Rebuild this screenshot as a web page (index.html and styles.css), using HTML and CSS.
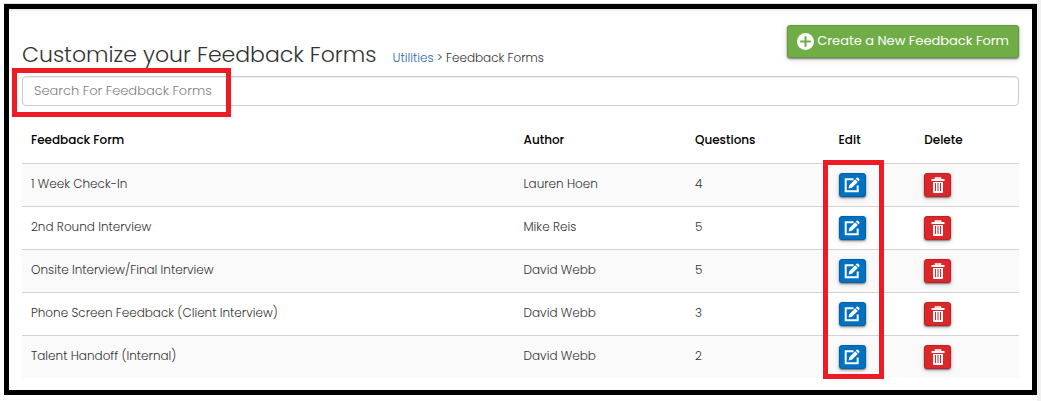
FILE: index.html
```html
<!DOCTYPE html>
<html lang="en">
<head>
<meta charset="utf-8">
<title>Customize your Feedback Forms</title>
<link rel="stylesheet" href="styles.css">
</head>
<body>
<svg class="sprite" aria-hidden="true">
  <symbol id="icon-edit" viewBox="0 0 16 16">
    <path d="M9.5 2.2H1.7v12.1h12V8.6" fill="none" stroke="currentColor" stroke-width="2"/>
    <path d="M4.6 11.6l.7-3.4 5.9-5.9 2.6 2.6-5.9 5.9zM11.8 1.7l.9-.9q.7-.7 1.4 0l1.2 1.2q.7.7 0 1.4l-.9.9z" fill="currentColor"/>
  </symbol>
  <symbol id="icon-trash" viewBox="0 0 16 16">
    <path d="M5.5 3V1h5v2" fill="none" stroke="currentColor" stroke-width="1.6"/>
    <path d="M2 2h12q.5 0 .5.5V4h-13V2.500q0-.5.5-.5z" fill="currentColor"/>
    <path fill-rule="evenodd" d="M3 5h10v10q0 1-1 1H4q-1 0-1-1zM5 6v8h1V6zm2.500 0v8h1V6zM10 6v8h1V6z" fill="currentColor"/>
  </symbol>
</svg>
<main class="page">
  <header class="header">
    <div class="heading">
      <h1 class="title">Customize your Feedback Forms</h1>
      <nav class="crumbs"><a class="link" href="#">Utilities</a> &gt; Feedback Forms</nav>
    </div>
    <button class="btn btn-create" type="button">
      <svg class="icon-plus" viewBox="0 0 16 16" aria-hidden="true"><circle cx="8" cy="8" r="8" fill="currentColor"/><path d="M8 3v10M3 8h10" stroke="#70ad47" stroke-width="2"/></svg>
      <span>Create a New Feedback Form</span>
    </button>
  </header>
  <div class="search">
    <input class="search-input" type="search" placeholder="Search For Feedback Forms" aria-label="Search For Feedback Forms">
    <span class="mark mark-search"></span>
  </div>
  <table class="forms">
    <thead>
      <tr><th class="col-form">Feedback Form</th><th class="col-author">Author</th><th class="col-questions">Questions</th><th class="col-edit">Edit</th><th class="col-delete">Delete</th></tr>
    </thead>
    <tbody>
      <tr><td>1 Week Check-In</td><td>Lauren Hoen</td><td>4</td>
        <td class="marked"><button class="btn btn-icon btn-edit" type="button" aria-label="Edit"><svg class="icon"><use href="#icon-edit"/></svg></button><span class="mark mark-edit"></span></td>
        <td><button class="btn btn-icon btn-delete" type="button" aria-label="Delete"><svg class="icon"><use href="#icon-trash"/></svg></button></td></tr>
      <tr><td>2nd Round Interview</td><td>Mike Reis</td><td>5</td>
        <td><button class="btn btn-icon btn-edit" type="button" aria-label="Edit"><svg class="icon"><use href="#icon-edit"/></svg></button></td>
        <td><button class="btn btn-icon btn-delete" type="button" aria-label="Delete"><svg class="icon"><use href="#icon-trash"/></svg></button></td></tr>
      <tr><td>Onsite Interview/Final Interview</td><td>David Webb</td><td>5</td>
        <td><button class="btn btn-icon btn-edit" type="button" aria-label="Edit"><svg class="icon"><use href="#icon-edit"/></svg></button></td>
        <td><button class="btn btn-icon btn-delete" type="button" aria-label="Delete"><svg class="icon"><use href="#icon-trash"/></svg></button></td></tr>
      <tr><td>Phone Screen Feedback (Client Interview)</td><td>David Webb</td><td>3</td>
        <td><button class="btn btn-icon btn-edit" type="button" aria-label="Edit"><svg class="icon"><use href="#icon-edit"/></svg></button></td>
        <td><button class="btn btn-icon btn-delete" type="button" aria-label="Delete"><svg class="icon"><use href="#icon-trash"/></svg></button></td></tr>
      <tr><td>Talent Handoff (Internal)</td><td>David Webb</td><td>2</td>
        <td><button class="btn btn-icon btn-edit" type="button" aria-label="Edit"><svg class="icon"><use href="#icon-edit"/></svg></button></td>
        <td><button class="btn btn-icon btn-delete" type="button" aria-label="Delete"><svg class="icon"><use href="#icon-trash"/></svg></button></td></tr>
    </tbody>
  </table>
</main>
</body>
</html>
```
FILE: styles.css
```css
* { box-sizing: border-box; }
body {
  margin: 0;
  padding: 4px 4px 5px;
  background: linear-gradient(to left, #f0f0f0 4px, #fff 4px);
  color: #333;
  font-family: Poppins, Inter, "Open Sans", sans-serif;
  font-size: 12px;
  font-weight: 300;
  line-height: 18px;
}
.sprite { position: absolute; width: 0; height: 0; }
.page {
  border: 5px solid #000;
  background: #fff;
  padding: 0 13px 12px;
  box-shadow: inset 0 2px #eee, 0 -1px #ddd;
}
.header {
  display: flex;
  justify-content: space-between;
  align-items: flex-start;
  padding-top: 16px;
  height: 67px;
}
.heading {
  display: flex;
  align-items: baseline;
  gap: 16px;
  padding-top: 16px;
}
.title {
  margin: 0;
  font-size: 22px;
  line-height: 28px;
  font-weight: 300;
}
.link { color: #1f6bb0; text-decoration: none; }
.btn {
  display: flex;
  align-items: center;
  justify-content: center;
  border: 1px solid;
  border-radius: 3px;
  color: #fff;
  font: inherit;
  box-shadow: 0 1px 2px rgba(0, 0, 0, .5), 0 2px 6px rgba(0, 0, 0, .12);
}
.btn-create {
  gap: 3px;
  height: 33px;
  padding: 0 9px 1px;
  background: #70ad47;
  border-color: #629c3b;
  font-size: 13px;
  font-weight: 400;
}
.icon-plus { width: 17px; height: 17px; }
.search { position: relative; }
.search-input {
  display: block;
  width: 100%;
  height: 30px;
  padding: 0 11px;
  border: 1px solid #ccc;
  border-radius: 4px;
  background: #fff;
  box-shadow: inset 0 1px 1px rgba(0, 0, 0, .08);
  font: inherit;
  font-size: 13px;
  appearance: none;
}
.search-input::placeholder { color: #808080; opacity: 1; }
.mark {
  position: absolute;
  border: 5px solid #ed1c24;
  pointer-events: none;
}
.mark-search { left: -10px; top: -8px; width: 219px; height: 49px; }
.mark-edit { left: -7px; top: -4px; width: 61px; height: 219px; z-index: 1; }
.forms {
  width: 100%;
  margin-top: 10px;
  border-collapse: separate;
  border-spacing: 0;
  table-layout: fixed;
}
.forms th {
  height: 47px;
  padding: 0 9px;
  text-align: left;
  font-weight: 500;
  color: #000;
}
.forms td {
  height: 43px;
  padding: 9px 9px 0;
  border-top: 1px solid #d3d3d3;
  line-height: 22px;
  vertical-align: top;
}
.forms tbody tr:nth-child(odd) { background: #fafafa; }
.forms .marked { position: relative; }
.col-form { width: 49.4%; }
.col-author { width: 17.2%; }
.col-questions { width: 14.4%; }
.col-edit { width: 8.6%; }
.btn-icon { width: 27px; height: 24px; padding: 0 0 1px; }
.btn-edit { background: #0070c0; border-color: #0062a8; }
.btn-delete { background: #d9272a; border-color: #bf2023; }
.icon { width: 16px; height: 16px; }
```
